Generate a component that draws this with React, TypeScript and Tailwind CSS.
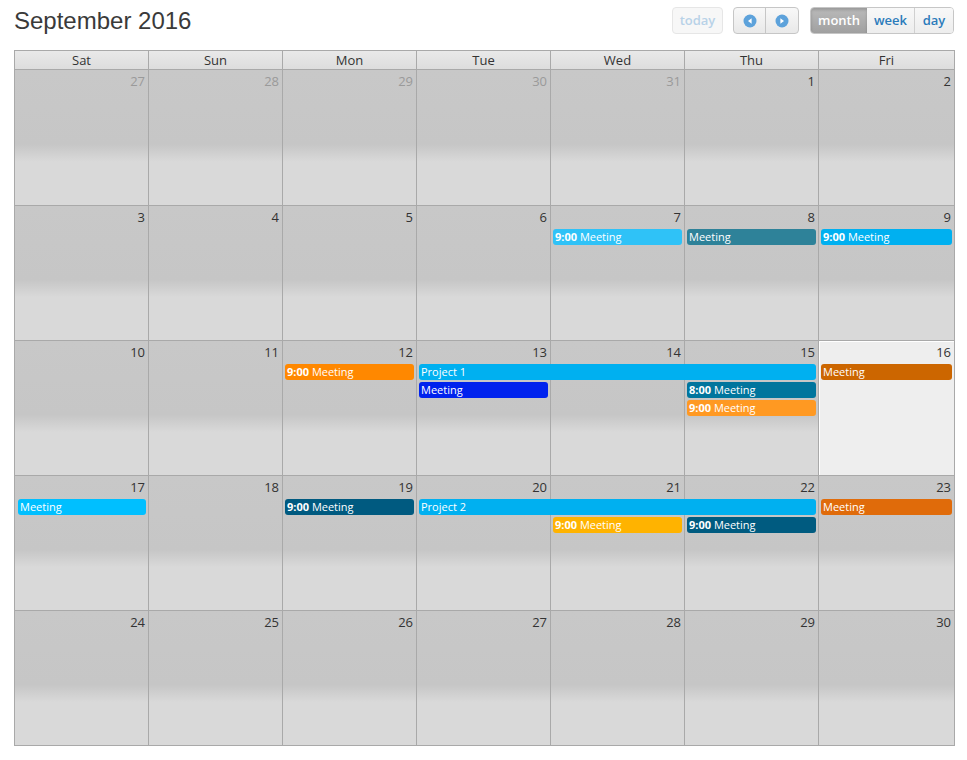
import React from "react";

type Ev = { col: number; span: number; lane: number; color: string; time?: string; title: string };
type Week = { days: { n: number; other?: boolean; today?: boolean }[]; events: Ev[] };

const colStart = ["col-start-1", "col-start-2", "col-start-3", "col-start-4", "col-start-5", "col-start-6", "col-start-7"];
const colSpan = ["col-span-1", "col-span-2", "col-span-3"];
const laneRow = ["row-start-2", "row-start-3", "row-start-4"];
const rowH = ["h-[136px] border-b", "h-[135px] border-b", "h-[135px] border-b", "h-[135px] border-b", "h-[134px]"];

const mk = (start: number, today = -1) =>
  Array.from({ length: 7 }, (_, i) => ({ n: start + i, other: false, today: i === today }));

const weeks: Week[] = [
  {
    days: [
      { n: 27, other: true },
      { n: 28, other: true },
      { n: 29, other: true },
      { n: 30, other: true },
      { n: 31, other: true },
      { n: 1 },
      { n: 2 },
    ],
    events: [],
  },
  {
    days: mk(3),
    events: [
      { col: 4, span: 1, lane: 0, color: "bg-[#2fc2f7]", time: "9:00", title: "Meeting" },
      { col: 5, span: 1, lane: 0, color: "bg-[#2e8299]", title: "Meeting" },
      { col: 6, span: 1, lane: 0, color: "bg-[#00b0f0]", time: "9:00", title: "Meeting" },
    ],
  },
  {
    days: mk(10, 6),
    events: [
      { col: 2, span: 1, lane: 0, color: "bg-[#ff8800]", time: "9:00", title: "Meeting" },
      { col: 3, span: 3, lane: 0, color: "bg-[#00b0f0]", title: "Project 1" },
      { col: 3, span: 1, lane: 1, color: "bg-[#0022ee]", title: "Meeting" },
      { col: 5, span: 1, lane: 1, color: "bg-[#00759d]", time: "8:00", title: "Meeting" },
      { col: 5, span: 1, lane: 2, color: "bg-[#ff9922]", time: "9:00", title: "Meeting" },
      { col: 6, span: 1, lane: 0, color: "bg-[#cc6600]", title: "Meeting" },
    ],
  },
  {
    days: mk(17),
    events: [
      { col: 0, span: 1, lane: 0, color: "bg-[#00bfff]", title: "Meeting" },
      { col: 2, span: 1, lane: 0, color: "bg-[#005a80]", time: "9:00", title: "Meeting" },
      { col: 3, span: 3, lane: 0, color: "bg-[#00b0f0]", title: "Project 2" },
      { col: 4, span: 1, lane: 1, color: "bg-[#ffb300]", time: "9:00", title: "Meeting" },
      { col: 5, span: 1, lane: 1, color: "bg-[#005b80]", time: "9:00", title: "Meeting" },
      { col: 6, span: 1, lane: 0, color: "bg-[#e06b0a]", title: "Meeting" },
    ],
  },
  { days: mk(24), events: [] },
];

const dayNames = ["Sat", "Sun", "Mon", "Tue", "Wed", "Thu", "Fri"];

function Arrow({ dir }: { dir: "l" | "r" }) {
  return (
    <svg width="14" height="14" viewBox="0 0 14 14">
      <circle cx="7" cy="7" r="6.5" fill="#5da2db" />
      {dir === "l" ? <path d="M8.6 4.2 L5 7 L8.6 9.8 Z" fill="#fff" /> : <path d="M5.4 4.2 L9 7 L5.4 9.8 Z" fill="#fff" />}
    </svg>
  );
}

const cols = "grid-cols-[133px_134px_134px_134px_134px_134px_1fr]";

export default function App() {
  return (
    <div className="w-[967px] h-[760px] bg-white font-['Open_Sans',sans-serif] text-[#333]">
      <div className="flex items-center justify-between pl-[14px] pr-[13px] pt-[7px] h-[50px] pb-[16px]">
        <h2 className="font-['Liberation_Sans',Arial,sans-serif] text-[24px] leading-[27px] text-[#3a3a3a]">September 2016</h2>
        <div className="flex items-center">
          <button className="h-[27px] w-[51px] rounded-[4px] border border-[#e6e6e6] bg-[#f7f7f7] text-[13px] font-semibold text-[#b8d2e8]">
            today
          </button>
          <div className="ml-[10px] flex h-[27px] overflow-hidden rounded-[4px] border border-[#c6c6c6] bg-[linear-gradient(to_bottom,#f8f8f8,#e9e9e9)]">
            <button className="flex w-[32px] items-center justify-center border-r border-[#c6c6c6]">
              <Arrow dir="l" />
            </button>
            <button className="flex w-[32px] items-center justify-center">
              <Arrow dir="r" />
            </button>
          </div>
          <div className="ml-[11px] flex h-[27px] overflow-hidden rounded-[4px] border border-[#c6c6c6] text-[13px] font-semibold">
            <button className="w-[56px] bg-[linear-gradient(to_bottom,#bababa,#a0a0a0)] text-white shadow-[inset_0_2px_3px_rgba(0,0,0,0.18)]">
              month
            </button>
            <button className="w-[48px] border-r border-[#d0d0d0] bg-[linear-gradient(to_bottom,#f8f8f8,#ededed)] text-[#2b7bbb]">
              week
            </button>
            <button className="w-[38px] bg-[linear-gradient(to_bottom,#f8f8f8,#ededed)] text-[#2b7bbb]">day</button>
          </div>
        </div>
      </div>

      <div className="ml-[14px] w-[941px] border border-[#a9a9a9]">
        <div className={`grid ${cols} h-[19px] border-b border-[#a9a9a9] bg-[linear-gradient(to_bottom,#e9e9e9,#dddddd)]`}>
          {dayNames.map((d, i) => (
            <div
              key={d}
              className={`text-center text-[13px] font-medium leading-[18px] text-[#333] ${i > 0 ? "border-l border-[#a9a9a9]" : ""}`}
            >
              {d}
            </div>
          ))}
        </div>
        {weeks.map((w, wi) => (
          <div key={wi} className={`grid ${cols} grid-rows-[23px_18px_18px_18px_1fr] border-[#a9a9a9] ${rowH[wi]}`}>
            {w.days.map((d, i) => (
              <div
                key={"bg" + i}
                className={`${colStart[i]} row-span-full ${i > 0 ? "border-l border-[#a9a9a9]" : ""} ${
                  d.today
                    ? "bg-[#eeeeee] shadow-[inset_1px_1px_0_#ffffff]"
                    : "bg-[linear-gradient(to_bottom,#c8c8c8_0%,#c6c6c6_55%,#d9d9d9_68%,#d9d9d9_100%)]"
                }`}
              />
            ))}
            {w.days.map((d, i) => (
              <div
                key={"n" + i}
                className={`${colStart[i]} row-start-1 pr-[3px] pt-[3px] text-right text-[13px] leading-[17px] ${
                  d.other ? "text-[#9a9a9a]" : "text-[#333]"
                }`}
              >
                {d.n}
              </div>
            ))}
            {w.events.map((e, k) => (
              <div
                key={"e" + k}
                className={`${colStart[e.col]} ${colSpan[e.span - 1]} ${laneRow[e.lane]} ml-[3px] mr-[2px] h-[16px] rounded-[3px] ${e.color} truncate px-[2px] text-[11px] leading-[16px] text-white`}
              >
                {e.time && <span className="font-bold">{e.time} </span>}
                {e.title}
              </div>
            ))}
          </div>
        ))}
      </div>
    </div>
  );
}
